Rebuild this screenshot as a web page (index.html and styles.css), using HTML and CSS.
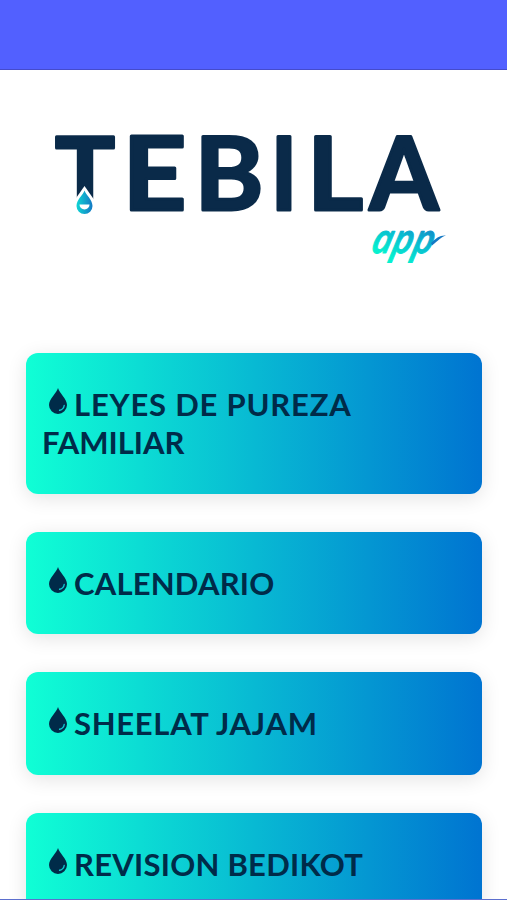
FILE: index.html
```html
<!DOCTYPE html>
<html lang="es">
<head>
  <meta charset="UTF-8" />
  <meta name="viewport" content="width=device-width, initial-scale=1.0"/>
  <title>Tebila App</title>
  <link rel="stylesheet" href="styles.css">
</head>
<body>

  <svg class="sprite" width="0" height="0">
    <symbol id="drop" viewBox="0 0 18 26">
      <path fill="#002b49" d="M9 0C7.600 5 0 11 0 17a9 9 0 0 0 18 0C18 11 10.400 5 9 0z"/>
      <path fill="none" stroke="#10c9d0" stroke-width="1.400" stroke-linecap="round" d="M15.200 17.500c-.4 2.700-2 4.300-4.600 4.800"/>
    </symbol>
  </svg>

  <div class="header"></div>

  <div class="logo">
    <svg width="507" height="282" viewBox="0 70 507 282">
      <defs>
        <linearGradient id="appGradient" x1="0" y1="1" x2="0.500" y2="0">
          <stop offset="0.250" stop-color="#06f0cf"/>
          <stop offset="0.600" stop-color="#08bdd0"/>
          <stop offset="1" stop-color="#1479c4"/>
        </linearGradient>
        <linearGradient id="dropGradient" x1="0" y1="0" x2="1" y2="0">
          <stop offset="0" stop-color="#0fd5d4"/>
          <stop offset="1" stop-color="#1479c4"/>
        </linearGradient>
      </defs>
      <g class="logo-title">
        <text x="55" y="209.500" textLength="60" lengthAdjust="spacingAndGlyphs">T</text>
        <text x="122.500" y="209.500" textLength="64" lengthAdjust="spacingAndGlyphs">E</text>
        <text x="194.500" y="209.500" textLength="69" lengthAdjust="spacingAndGlyphs">B</text>
        <text x="270.500" y="209.500" textLength="27" lengthAdjust="spacingAndGlyphs">I</text>
        <text x="307" y="209.500" textLength="56" lengthAdjust="spacingAndGlyphs">L</text>
        <text x="369.500" y="209.500" textLength="69" lengthAdjust="spacingAndGlyphs">A</text>
      </g>
      <path fill="#fff" d="M84.500 186L74 201v14h21v-14z"/>
      <path fill="url(#dropGradient)" d="M84.500 190.500c-1.500 4.500-8 9-8 15.500a8 8 0 0 0 16 0c0-6.500-6.500-11-8-15.500z"/>
      <path fill="#fff" d="M79.500 204.500h10a5 5 0 0 1-10 0z"/>
      <g transform="translate(370 252.500) skewX(-13)">
        <text class="logo-app" x="0" y="0" textLength="62" lengthAdjust="spacingAndGlyphs">app</text>
      </g>
      <path fill="#1479c4" d="M431 243c5-5 9-8 15-7.500-4 1-8 5-14 10z"/>
    </svg>
  </div>

  <div class="menu">
    <div class="card">
      <svg class="icon"><use href="#drop"/></svg><span class="leyes">LEYES DE PUREZA</span><br>FAMILIAR
    </div>
    <div class="card">
      <svg class="icon"><use href="#drop"/></svg><span class="calendario">CALENDARIO</span>
    </div>
    <div class="card">
      <svg class="icon"><use href="#drop"/></svg><span class="sheelat">SHEELAT JAJAM</span>
    </div>
    <div class="card">
      <svg class="icon"><use href="#drop"/></svg><span class="revision">REVISION BEDIKOT</span>
    </div>
  </div>

  <div class="bottom-line"></div>

</body>
</html>
```
FILE: styles.css
```css
body {
  font-family: Lato, sans-serif;
  background: #fff;
  margin: 0;
  height: 900px;
  overflow: hidden;
}

.sprite {
  display: none;
}

.header {
  height: 70px;
  box-sizing: border-box;
  background: #5260ff;
  border-bottom: 1px solid #454bcb;
}

.logo {
  height: 283px;
}

.logo svg {
  display: block;
}

.logo-title {
  font-family: Lato, sans-serif;
  font-size: 101px;
  font-weight: bold;
  fill: #0a2a49;
  stroke: #0a2a49;
  stroke-width: 3px;
  stroke-linejoin: round;
}

.logo-app {
  font-family: "Open Sans", sans-serif;
  font-size: 40px;
  font-style: italic;
  font-weight: 600;
  fill: url(#appGradient);
  stroke: url(#appGradient);
  stroke-width: 1px;
  stroke-linejoin: round;
}

.menu {
  display: flex;
  flex-direction: column;
  gap: 38px;
  padding: 0 25px 0 26px;
}

.card {
  box-sizing: border-box;
  padding: 32px 16px 32.5px;
  border-radius: 12px;
  background: linear-gradient(to right, #10ffd5, #0074d1);
  box-shadow: 0 4px 20px rgba(0, 0, 0, 0.11);
  color: #002b49;
  font-size: 31px;
  font-weight: bold;
  line-height: 38px;
}

.icon {
  width: 18px;
  height: 26px;
  margin: 0 7px 0 7px;
  vertical-align: 2px;
}

.leyes {
  letter-spacing: 0.8px;
}

.calendario {
  letter-spacing: 0.2px;
}

.sheelat {
  letter-spacing: 0.7px;
}

.revision {
  letter-spacing: 0.25px;
}

.bottom-line {
  position: absolute;
  top: 899px;
  left: 0;
  width: 100%;
  height: 1px;
  background: #5c6fce;
}
```
